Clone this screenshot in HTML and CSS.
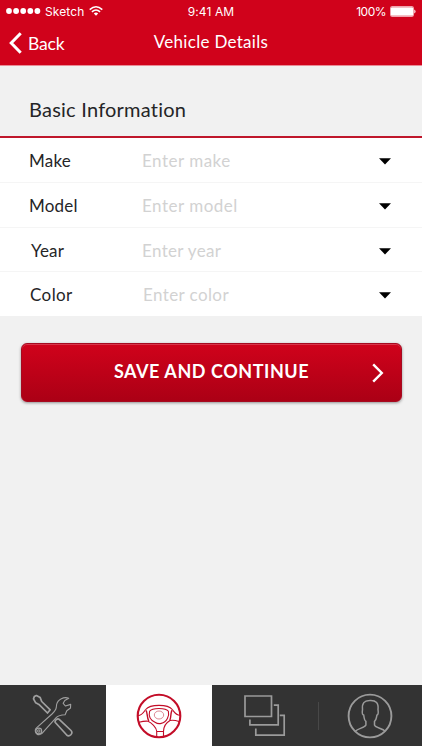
FILE: index.html
```
<!DOCTYPE html>
<html lang="en">
<head>
<meta charset="utf-8">
<title>Vehicle Details</title>
<link rel="stylesheet" href="styles.css">
</head>
<body>
<header class="header">
  <div class="status">
    <div class="carrier">
      <svg class="dots" width="35" height="8" viewBox="0 0 35 8"><g fill="#fff"><circle cx="3" cy="4" r="2.9"/><circle cx="10.1" cy="4" r="2.9"/><circle cx="17.2" cy="4" r="2.9"/><circle cx="24.3" cy="4" r="2.9"/><circle cx="31.4" cy="4" r="2.9"/></g></svg>
      <span class="sketch">Sketch</span>
      <svg class="wifi" width="14" height="10" viewBox="0 0 14 10" fill="none" stroke="#fff" stroke-width="1.5"><path d="M.7 3.6Q7-2 13.3 3.6M2.9 5.9Q7 2.2 11.1 5.9"/><path d="M4.8 7.5Q7 5.6 9.2 7.5L7 9.8z" fill="#fff" stroke="none"/></svg>
    </div>
    <span class="time">9:41 AM</span>
    <div class="power">
      <span class="percent">100%</span>
      <svg class="battery" width="26" height="11" viewBox="0 0 26 11"><rect x=".5" y=".5" width="23" height="10" rx="1.2" fill="none" stroke="#f0a5ae"/><rect x="1" y="1.2" width="22" height="8.6" rx=".6" fill="#fff"/><path d="M24.3 3.5q1.2.3 1.2 2t-1.2 2z" fill="#fff"/></svg>
    </div>
  </div>
  <nav class="nav">
    <a class="back"><svg width="13" height="22" viewBox="0 0 13 22" fill="none" stroke="#fff" stroke-width="3"><path d="M11.7 1.2 2.2 11l9.5 9.8"/></svg><span class="back-text">Back</span></a>
    <h1 class="title">Vehicle Details</h1>
  </nav>
</header>
<main class="main">
  <h2 class="section"><span class="section-text">Basic Information</span></h2>
  <div class="form">
    <div class="row make"><span class="label">Make</span><span class="hint">Enter make</span><svg class="caret" width="12" height="7" viewBox="0 0 12 7"><path d="M0 .3h12L6 6.5z"/></svg></div>
    <div class="row model"><span class="label">Model</span><span class="hint">Enter model</span><svg class="caret" width="12" height="7" viewBox="0 0 12 7"><path d="M0 .3h12L6 6.5z"/></svg></div>
    <div class="row year"><span class="label">Year</span><span class="hint">Enter year</span><svg class="caret" width="12" height="7" viewBox="0 0 12 7"><path d="M0 .3h12L6 6.5z"/></svg></div>
    <div class="row color"><span class="label">Color</span><span class="hint">Enter color</span><svg class="caret" width="12" height="7" viewBox="0 0 12 7"><path d="M0 .3h12L6 6.5z"/></svg></div>
  </div>
  <button class="save"><span class="save-text">SAVE AND CONTINUE</span><svg class="chevron" width="12" height="20" viewBox="0 0 12 20" fill="none" stroke="#fff" stroke-width="2.4"><path d="M1.2 1.3 9.8 10l-8.6 8.7"/></svg></button>
</main>
<footer class="tabs">
  <a class="tab tools"><svg width="42" height="44" viewBox="0 0 42 44" fill="none" stroke="#a0a0a0" stroke-width="1.1" stroke-linejoin="round">
    <path stroke-width="1.7" d="M2.3 2.6 4.4 1.5 8.2 3.6 9.7 7.5 18.2 15.8 15.5 19 6.9 10.4 3.7 8.8 1.5 4.9z"/>
    <path d="M36.7 4.2C32 2.5 25.8 5 24.6 10.5 24.3 14.5 24.4 15.5 20 20L4.8 33.6C2 36 3.3 40.5 7.3 40.8 9.5 40.8 10.7 39 12 37.2L24.4 23.4C26.2 21.6 29 21 33.1 20.7L34.8 16.8 38.5 14 38.7 10.4 33.4 12 31.2 9.3 32.8 6.4z"/>
    <circle cx="6.8" cy="37" r="2.9"/><circle cx="6.8" cy="37" r="1.2"/>
    <path stroke-width="1.7" d="M23.3 28.5C22.3 26.5 25.5 23.8 27.2 25.3L39 36.5C41.8 39.3 37.4 43.6 34.5 40.8z"/></svg></a>
  <a class="tab wheel"><svg width="46" height="46" viewBox="0 0 46 46" fill="none" stroke="#c30d28" stroke-width="1.1">
    <circle cx="23" cy="23" r="21.3" stroke-width="2.1"/>
    <path d="M2 22.7C6.5 22.3 8 18.5 9.7 16.5 14 11 32 11 36.3 16.5 38 18.5 39.5 22 44 22.3M3 29.2C7 28.2 9 28 12 28.2 15.5 29.7 20.4 34.5 20.7 38.2V44M43 28.5C39 27.2 37 27 34 27.5 30.5 29.5 27.7 34 27.5 38.2V44M20.7 38.5h7"/>
    <path stroke-width="1.4" d="M9.8 17.4C11.6 18.5 10.6 24 12.8 28M36.2 17.4C34.4 18.5 35.4 24 33.8 27.5"/>
    <path d="M13.6 18.3C16 14.6 30 14.6 32.4 18.3 33.5 22.5 31 29.2 25.2 30.4 23 31 21 30.6 19 29.2 14.5 27 12.5 22.7 13.6 18.3z"/>
    <ellipse cx="23" cy="22" rx="4.7" ry="4" stroke="#d77b86" stroke-width=".9"/></svg></a>
  <a class="tab layers"><svg width="42" height="42" viewBox="0 0 42 42" fill="none" stroke="#9b9b9b" stroke-width="1.7">
    <path d="M1 1h26.5v20.5H1zM29.8 10.2h4.4v19.6H5.9v-5.3M35.8 20.4h4.4v19.7H11.8v-6.5"/></svg></a>
  <a class="tab profile"><svg width="46" height="46" viewBox="0 0 46 46" fill="none" stroke="#9b9b9b" stroke-width="1.5">
    <circle cx="23" cy="23" r="21.4" stroke-width="1.9"/>
    <path d="M8.2 38.3C11.5 35 17.8 34.9 18.9 32V28.4C16.8 26.7 17.4 25.5 16.7 22.1 14.8 21.8 15.2 18.5 15.5 16.6 14.8 10 17.4 7.6 22.4 7.5 29.3 7 31.8 10 31 16.6 31.4 19 31.2 21.7 29.9 22.1 29.2 25.3 29.6 26.7 27.5 28.4V32C28.6 35 35 35.1 38.3 38.2"/></svg></a>
</footer>
</body>
</html>
```
FILE: styles.css
```
* { box-sizing: border-box; }
body {
  margin: 0;
  width: 422px;
  height: 750px;
  display: flex;
  flex-direction: column;
  background: #fff;
  color: #252527;
  font-family: Lato, "Liberation Sans", sans-serif;
  font-variant-ligatures: none;
  overflow: hidden;
}
svg { display: block; flex: none; }
span { white-space: nowrap; }
.header { height: 66px; background: #d0021b; color: #fff; border-bottom: 1px solid #e98b96; }
.status {
  display: grid;
  grid-template-columns: 1fr auto 1fr;
  height: 24px;
  padding: 0 6px 0 6px;
  align-items: center;
  font: 12px/24px Inter, sans-serif;
}
.carrier, .power { display: flex; align-items: center; }
.power { justify-content: flex-end; gap: 4px; }
.percent { letter-spacing: -.5px; }
.battery { margin-top: -2px; }
.dots { margin-top: -2px; }
.sketch { margin-left: 4px; letter-spacing: .1px; }
.wifi { margin-left: 5px; margin-top: -3px; }
.time { letter-spacing: .1px; }
.nav { display: grid; grid-template-columns: 1fr auto 1fr; height: 41px; }
.back { display: flex; align-items: center; gap: 6px; height: 38px; padding-left: 9px; }
.back-text { font-size: 17.5px; letter-spacing: -.2px; }
.title { margin: 0; font-size: 17px; font-weight: 400; line-height: 35px; letter-spacing: .3px; }
.main { height: 619px; background: #f1f1f1; }
.section {
  display: flex;
  margin: 0;
  height: 72px;
  padding: 25px 0 0 29px;
  border-bottom: 2px solid #bf172b;
  font-size: 20px;
  font-weight: 400;
  line-height: 36px;
  letter-spacing: .23px;
}
.form { height: 178px; background: #fff; display: grid; grid-template-rows: 45px 45px 44px 44px; }
.row {
  display: grid;
  grid-template-columns: 113px 1fr 12px;
  align-items: center;
  padding: 1px 31px 0 29px;
  border-bottom: 1px solid #f5f5f5;
  font-size: 17px;
  letter-spacing: .2px;
}
.year { padding-top: 2px; }
.year .label { padding-left: 2px; letter-spacing: .2px; }
.color { border-bottom: 0; }
.color .label { padding-left: 1px; letter-spacing: .4px; }
.color .hint { padding-left: 1px; letter-spacing: .4px; }
.year .hint { letter-spacing: .35px; }
.caret { margin-top: 1px; }
.hint { color: #d2d2d2; letter-spacing: .5px; }
.save {
  display: grid;
  grid-template-columns: 1fr 12px;
  align-items: center;
  width: 381px;
  height: 59px;
  margin: 27px 0 0 21px;
  padding: 0 17px 0 29px;
  border: 1px solid #a60a20;
  border-radius: 6px;
  background: linear-gradient(#d0021b, #ab0015);
  box-shadow: inset 0 1px #d9354a, 0 1px 3px #0006;
  color: #fff;
  font: 700 18px Lato, sans-serif;
}
.save-text { text-align: center; padding-bottom: 4px; letter-spacing: .55px; }
.tabs {
  display: grid;
  grid-template-columns: 106px 106px 106px 104px;
  height: 61px;
  background: #333;
}
.tab { display: flex; align-items: center; justify-content: center; }
.wheel { background: #fff; }
.profile { position: relative; }
.profile::before { content: ""; position: absolute; left: 0; top: 17px; width: 1px; height: 28px; background: #484848; }
```
